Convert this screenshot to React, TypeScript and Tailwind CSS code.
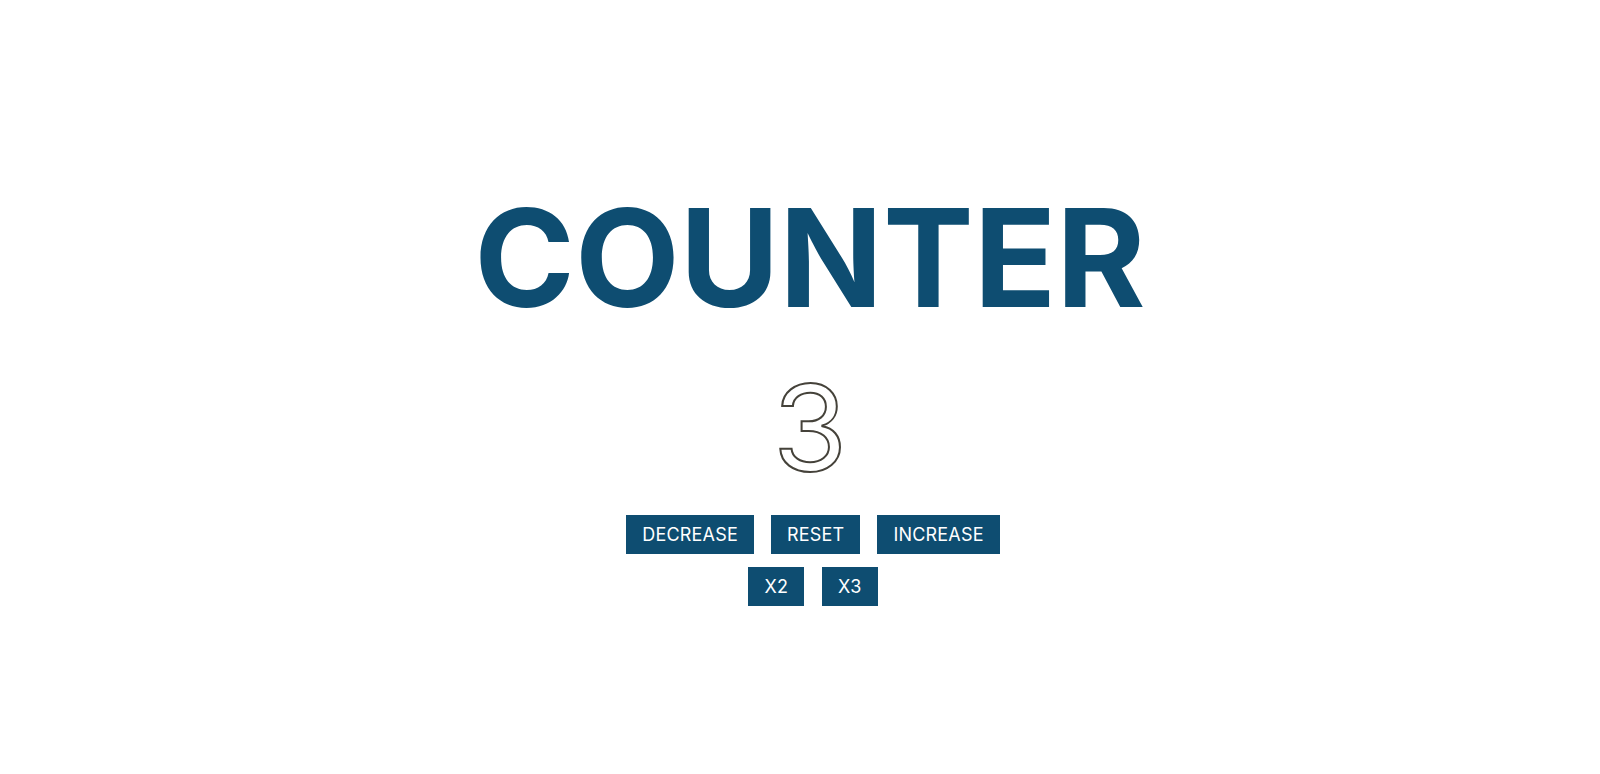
import { useState } from "react";

const buttonClass =
  "bg-[#0e4d71] px-[16px] h-[39px] text-[18px] tracking-[0.2px] text-white uppercase leading-none";

export default function App() {
  const [count, setCount] = useState(3);

  return (
    <div className="flex h-[774px] w-full flex-col items-center bg-white pl-[20px] font-['Inter',sans-serif]">
      <h1 className="mt-[190px] text-[136px] font-bold leading-none text-[#0e4d71]">
        COUNTER
      </h1>
      <p className="mt-[42px] text-[120px] leading-none text-transparent [-webkit-text-stroke:2px_#45423a]">
        {count}
      </p>
      <div className="mt-[27px] flex gap-[17px] pl-[6px]">
        <button className={buttonClass} onClick={() => setCount((c) => c - 1)}>
          Decrease
        </button>
        <button className={buttonClass} onClick={() => setCount(0)}>
          Reset
        </button>
        <button className={buttonClass} onClick={() => setCount((c) => c + 1)}>
          Increase
        </button>
      </div>
      <div className="mt-[13px] flex gap-[18px] pl-[6px]">
        <button className={buttonClass} onClick={() => setCount((c) => c * 2)}>
          x2
        </button>
        <button className={buttonClass} onClick={() => setCount((c) => c * 3)}>
          x3
        </button>
      </div>
    </div>
  );
}
